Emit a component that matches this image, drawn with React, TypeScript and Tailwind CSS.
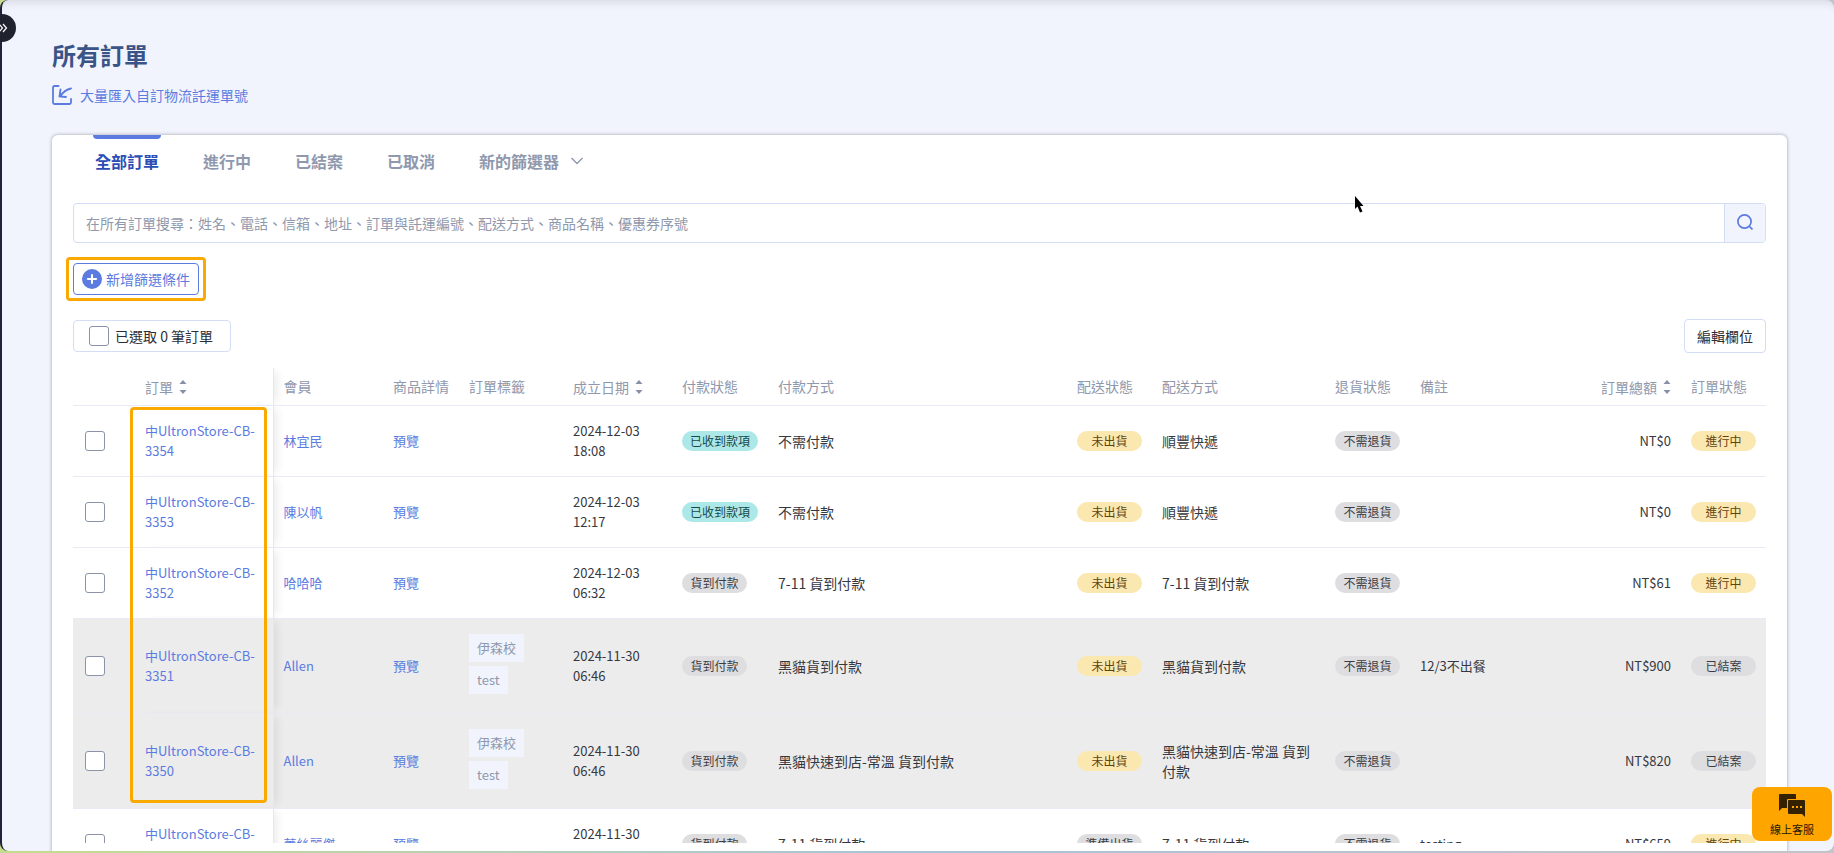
import { Plus } from "lucide-react";

type Tone = "teal" | "gray" | "yellow";

const TONES: Record<Tone, string> = {
    teal: "bg-[#ade8e8] text-[#17494a]",
    gray: "bg-[#dedee0] text-[#3b3d45]",
    yellow: "bg-[#fbe8b0] text-[#5f4410]",
};

interface Order {
    id: string;
    member: string;
    tags: string[];
    date: string;
    time: string;
    payStatus: string;
    payTone: Tone;
    payMethod: string;
    shipStatus: string;
    shipTone: Tone;
    shipMethod: string;
    note: string;
    total: string;
    status: string;
    closed: boolean;
}

const ORDERS: Order[] = [
    { id: "3354", member: "林宜民", tags: [], date: "2024-12-03", time: "18:08", payStatus: "已收到款項", payTone: "teal", payMethod: "不需付款", shipStatus: "未出貨", shipTone: "yellow", shipMethod: "順豐快遞", note: "", total: "NT$0", status: "進行中", closed: false },
    { id: "3353", member: "陳以帆", tags: [], date: "2024-12-03", time: "12:17", payStatus: "已收到款項", payTone: "teal", payMethod: "不需付款", shipStatus: "未出貨", shipTone: "yellow", shipMethod: "順豐快遞", note: "", total: "NT$0", status: "進行中", closed: false },
    { id: "3352", member: "哈哈哈", tags: [], date: "2024-12-03", time: "06:32", payStatus: "貨到付款", payTone: "gray", payMethod: "7-11 貨到付款", shipStatus: "未出貨", shipTone: "yellow", shipMethod: "7-11 貨到付款", note: "", total: "NT$61", status: "進行中", closed: false },
    { id: "3351", member: "Allen", tags: ["伊森校", "test"], date: "2024-11-30", time: "06:46", payStatus: "貨到付款", payTone: "gray", payMethod: "黑貓貨到付款", shipStatus: "未出貨", shipTone: "yellow", shipMethod: "黑貓貨到付款", note: "12/3不出餐", total: "NT$900", status: "已結案", closed: true },
    { id: "3350", member: "Allen", tags: ["伊森校", "test"], date: "2024-11-30", time: "06:46", payStatus: "貨到付款", payTone: "gray", payMethod: "黑貓快速到店-常溫 貨到付款", shipStatus: "未出貨", shipTone: "yellow", shipMethod: "黑貓快速到店-常溫 貨到付款", note: "", total: "NT$820", status: "已結案", closed: true },
    { id: "3349", member: "蕾絲麗傑", tags: [], date: "2024-11-30", time: "06:40", payStatus: "貨到付款", payTone: "gray", payMethod: "7-11 貨到付款", shipStatus: "準備出貨", shipTone: "gray", shipMethod: "7-11 貨到付款", note: "testing", total: "NT$659", status: "進行中", closed: false },
];

const TABS = ["全部訂單", "進行中", "已結案", "已取消"];

function Badge({ tone, children }: { tone: Tone; children: string }) {
    return (
        <span className={`inline-flex h-5 min-w-[65px] items-center justify-center rounded-full px-2 align-middle text-xs whitespace-nowrap ${TONES[tone]}`}>
            {children}
        </span>
    );
}

function Checkbox({ label }: { label: string }) {
    return (
        <input
            type="checkbox"
            aria-label={label}
            className="block size-5 shrink-0 appearance-none rounded-[3px] border border-[#8a93a8] bg-white"
        />
    );
}

function SortIcon() {
    return (
        <svg width="8" height="14" viewBox="0 0 8 14" fill="#8790a8" aria-hidden="true">
            <path d="M4 0 7.500 4h-7zM4 14 .5 10h7z" />
        </svg>
    );
}

function HeadCell({ label, sortable = false, className = "" }: { label: string; sortable?: boolean; className?: string }) {
    return (
        <th className={`px-2.5 text-left text-sm font-normal whitespace-nowrap text-[#8f98ad] ${className}`}>
            {sortable ? (
                <button type="button" className="inline-flex items-center gap-1.5 align-middle">
                    {label}
                    <SortIcon />
                </button>
            ) : (
                label
            )}
        </th>
    );
}

function OrderRow({ order }: { order: Order }) {
    return (
        <tr className={`border-b border-[#e8ebf7] ${order.closed ? "h-[95px] bg-[#ececec]" : "h-[71px] bg-white"}`}>
            <td className="pl-3">
                <Checkbox label={`選取訂單 ${order.id}`} />
            </td>
            <td className="border-r border-[#e4e8f5] px-2.5 shadow-[8px_0_8px_-4px_rgba(40,45,60,0.09)]">
                <a href="#order" className="text-[#5b7be0]">
                    中UltronStore-CB-
                    <br />
                    {order.id}
                </a>
            </td>
            <td className="px-2.5">
                <a href="#member" className="text-[#5b7be0]">{order.member}</a>
            </td>
            <td className="px-2.5">
                <a href="#preview" className="text-[#5b7be0]">預覽</a>
            </td>
            <td className="px-2.5">
                {order.tags.map((tag) => (
                    <span key={tag} className="mb-1 flex h-7 w-fit items-center bg-[#f1f4fd] px-2 text-[#8f98ad]">
                        {tag}
                    </span>
                ))}
            </td>
            <td className="px-2.5">
                {order.date}
                <br />
                {order.time}
            </td>
            <td className="px-2.5"><Badge tone={order.payTone}>{order.payStatus}</Badge></td>
            <td className="px-2.5 text-sm">{order.payMethod}</td>
            <td className="px-2.5"><Badge tone={order.shipTone}>{order.shipStatus}</Badge></td>
            <td className="px-2.5 text-sm">{order.shipMethod}</td>
            <td className="px-2.5"><Badge tone="gray">不需退貨</Badge></td>
            <td className="px-2.5">{order.note}</td>
            <td className="px-2.5 text-right">{order.total}</td>
            <td className="px-2.5"><Badge tone={order.closed ? "gray" : "yellow"}>{order.status}</Badge></td>
        </tr>
    );
}

function OrdersTable() {
    return (
        <div className="relative mt-[15px] min-h-0 flex-1 overflow-hidden">
            <table className="w-full table-fixed border-collapse text-[13px] leading-5 text-[#363840]">
                <colgroup>
                    <col className="w-[62px]" />
                    <col className="w-[138px]" />
                    <col className="w-[110px]" />
                    <col className="w-[76px]" />
                    <col className="w-[104px]" />
                    <col className="w-[109px]" />
                    <col className="w-[96px]" />
                    <col />
                    <col className="w-[85px]" />
                    <col className="w-[173px]" />
                    <col className="w-[85px]" />
                    <col className="w-[170px]" />
                    <col className="w-[101px]" />
                    <col className="w-[85px]" />
                </colgroup>
                <thead>
                    <tr className="h-[37px] border-b border-[#e8ebf7]">
                        <th aria-label="選取" />
                        <HeadCell label="訂單" sortable className="border-r border-[#e4e8f5] shadow-[8px_0_8px_-4px_rgba(40,45,60,0.09)]" />
                        <HeadCell label="會員" />
                        <HeadCell label="商品詳情" />
                        <HeadCell label="訂單標籤" />
                        <HeadCell label="成立日期" sortable />
                        <HeadCell label="付款狀態" />
                        <HeadCell label="付款方式" />
                        <HeadCell label="配送狀態" />
                        <HeadCell label="配送方式" />
                        <HeadCell label="退貨狀態" />
                        <HeadCell label="備註" />
                        <HeadCell label="訂單總額" sortable className="text-right" />
                        <HeadCell label="訂單狀態" />
                    </tr>
                </thead>
                <tbody>
                    {ORDERS.map((order) => (
                        <OrderRow key={order.id} order={order} />
                    ))}
                </tbody>
            </table>
            {/* Marks the order numbers */}
            <div className="pointer-events-none absolute top-[39px] left-[57px] h-[396px] w-[137px] rounded border-3 border-[#f9a900]" />
        </div>
    );
}

function ChatButton() {
    return (
        <button
            type="button"
            className="absolute right-0.5 bottom-2.5 flex h-[54px] w-20 flex-col items-center justify-end gap-1 rounded-lg bg-[#ffa500] pb-1 text-[11px] leading-4 text-[#1f1600]"
        >
            <svg width="26" height="23" viewBox="0 0 26 23" fill="#332100" aria-hidden="true">
                <path d="M1 0h15a1 1 0 0 1 1 1v4H9a1 1 0 0 0-1 1v8H3l-3 3V1a1 1 0 0 1 1-1z" />
                <path d="M10 6h15a1 1 0 0 1 1 1v16l-3-3H10a1 1 0 0 1-1-1V7a1 1 0 0 1 1-1z" />
                <path d="M13 12h2v2h-2zM17 12h2v2h-2zM21 12h2v2h-2z" fill="#ffa500" />
            </svg>
            線上客服
        </button>
    );
}

export default function App() {
    return (
        <div className="relative h-screen overflow-hidden bg-gradient-to-r from-[#c5dc8c] via-[#a9c3d6] to-[#c4c4c8] pb-0.5 font-['Noto_Sans_CJK_TC',sans-serif]">
            <div className="relative flex h-full flex-col overflow-hidden rounded-lg border-l-2 border-[#20243a] bg-[#f1f4fd] pr-[47px] pl-[50px] shadow-[inset_0_12px_8px_-10px_rgba(60,65,80,0.16)]">
                <header className="pt-[35px]">
                    <h1 className="text-2xl leading-10 font-bold text-[#3b5488]">所有訂單</h1>
                    <a href="#import" className="mt-2 flex w-fit items-center gap-2 text-sm leading-6 text-[#5b7be0]">
                        <svg width="20" height="20" viewBox="0 0 20 20" fill="none" stroke="currentColor" strokeWidth="1.8" strokeLinecap="round" aria-hidden="true">
                            <path d="M6.500 1H2.500A1.500 1.500 0 0 0 1 2.500v15A1.500 1.500 0 0 0 2.500 19h15a1.500 1.500 0 0 0 1.500-1.500V14" />
                            <path d="M19 3.500c-4 .8-8 3.500-11 8M8.500 4.500 7.500 11.500l6.500.5" />
                        </svg>
                        大量匯入自訂物流託運單號
                    </a>
                </header>

                <main className="mt-7 flex min-h-0 flex-1 flex-col rounded-t-md bg-white px-[21px] pb-2 shadow-[0_0_3px_1px_rgba(60,65,75,0.28)]">
                    <nav className="flex h-[54px] gap-11 pl-[22px] text-base font-bold text-[#8f98ad]">
                        {TABS.map((tab, i) => (
                            <a key={tab} href="#tab" className={`relative flex items-center pb-0.5 ${i === 0 ? "text-[#2b4db5]" : ""}`}>
                                {i === 0 && <span className="absolute -inset-x-0.5 top-0 h-1 rounded-b bg-[#5b7be0]" />}
                                {tab}
                            </a>
                        ))}
                        <button type="button" className="flex items-center gap-3 pb-0.5">
                            新的篩選器
                            <svg width="12" height="8" viewBox="0 0 12 8" fill="none" stroke="currentColor" strokeWidth="1.4" aria-hidden="true">
                                <path d="M.5 1 6 6.500 11.500 1" />
                            </svg>
                        </button>
                    </nav>

                    <form className="mt-3.5 flex h-10 shrink-0 overflow-hidden rounded border border-[#d3ddf3]">
                        <input
                            type="search"
                            aria-label="搜尋訂單"
                            placeholder="在所有訂單搜尋：姓名、電話、信箱、地址、訂單與託運編號、配送方式、商品名稱、優惠券序號"
                            className="min-w-0 flex-1 px-3 text-sm outline-none placeholder:text-[#8f98ad]"
                        />
                        <button type="button" aria-label="搜尋" className="flex w-[41px] items-center justify-center border-l border-[#d3ddf3] bg-[#f1f4fd] pb-0.5 text-[#5b7be0]">
                            <svg width="16" height="16" viewBox="0 0 16 16" fill="none" stroke="currentColor" strokeWidth="1.7" aria-hidden="true">
                                <circle cx="7.500" cy="7.500" r="6.600" />
                                <path d="M12 12 15.500 15.500" />
                            </svg>
                        </button>
                    </form>

                    <div className="relative mt-5 w-fit">
                        <button type="button" className="flex h-8 items-center gap-1 rounded border border-[#5b7be0] px-2 text-sm text-[#5b7be0]">
                            <span className="flex size-5 items-center justify-center rounded-full bg-[#5b7be0] text-white">
                                <Plus size={14} strokeWidth={3.5} />
                            </span>
                            新增篩選條件
                        </button>
                        <div className="pointer-events-none absolute -inset-x-[7px] -inset-y-1.5 rounded border-3 border-[#f9a900]" />
                    </div>

                    <div className="mt-6 flex items-center justify-between text-sm text-[#2b2d36]">
                        <label className="flex h-8 items-center gap-1.5 rounded border border-[#d3ddf3] pr-[17px] pl-[15px]">
                            <Checkbox label="全選" />
                            已選取 0 筆訂單
                        </label>
                        <button type="button" className="h-[34px] rounded border border-[#d3ddf3] px-3">編輯欄位</button>
                    </div>

                    <OrdersTable />
                </main>

                <ChatButton />
            </div>

            <button
                type="button"
                aria-label="展開選單"
                className="absolute top-3.5 left-0 flex h-7 w-4 items-center rounded-r-full bg-[#20222e]"
            >
                <svg width="8" height="10" viewBox="0 0 8 10" fill="none" stroke="#fff" strokeWidth="1.2" aria-hidden="true">
                    <path d="M-1 1l3.500 4L-1 9M3 1l3.500 4L3 9" />
                </svg>
            </button>

            {/* Mouse pointer */}
            <svg className="pointer-events-none absolute top-[196px] left-[1354px]" width="12" height="18" viewBox="0 0 12 18" aria-hidden="true">
                <path d="M1 0v13l2.500-2.500 2.500 6 2.500-1L6 10h3.500z" fill="#000" />
            </svg>
        </div>
    );
}
